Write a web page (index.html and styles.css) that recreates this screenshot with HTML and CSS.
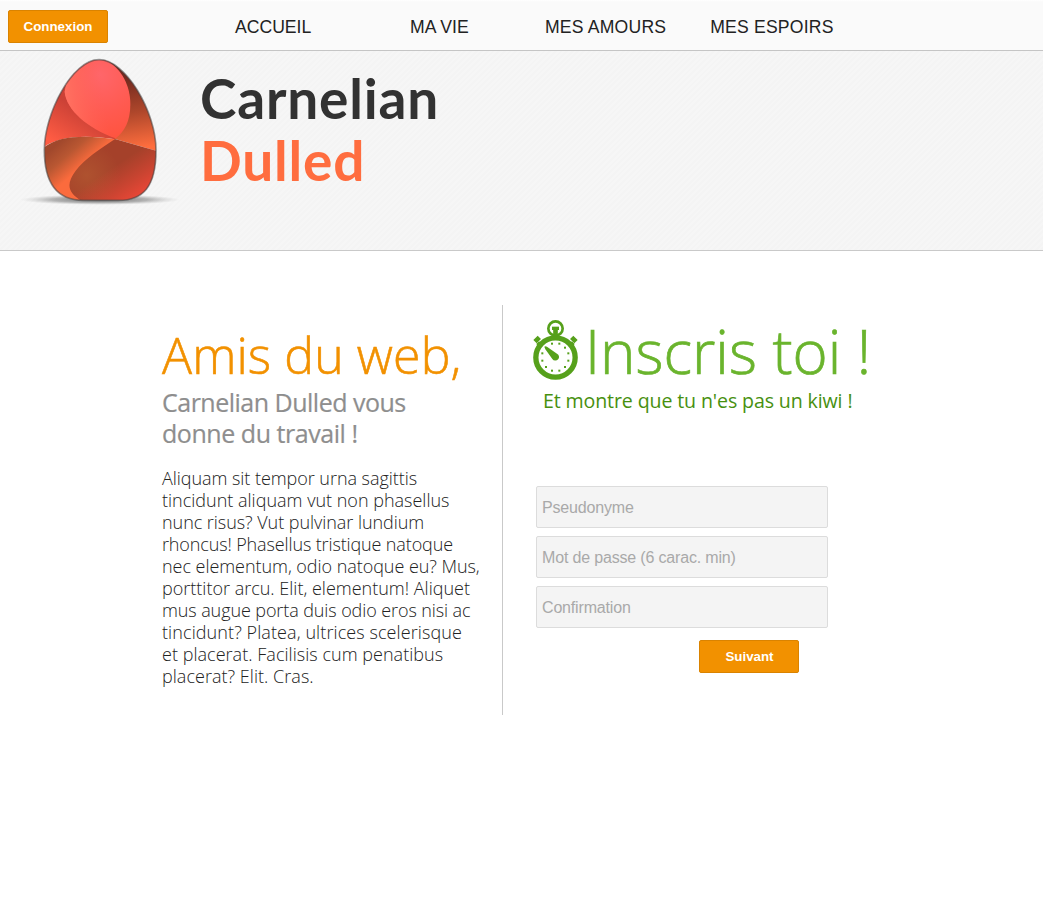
FILE: index.html
```
<!DOCTYPE html>
<html lang="fr">
<head>
<meta charset="utf-8">
<title>Carnelian Dulled</title>
<link rel="stylesheet" href="styles.css">
</head>
<body>
<nav class="topbar">
  <button class="btn" type="button">Connexion</button>
  <ul class="menu">
    <li>ACCUEIL</li>
    <li>MA VIE</li>
    <li class="wide">MES AMOURS</li>
    <li class="wide">MES ESPOIRS</li>
  </ul>
</nav>
<header class="banner">
  <svg class="egg" viewBox="0 0 510 495" aria-hidden="true">
    <defs>
      <radialGradient id="shadow"><stop offset="0" stop-color="#555" stop-opacity=".9"/><stop offset=".6" stop-color="#888" stop-opacity=".6"/><stop offset="1" stop-color="#bbb" stop-opacity="0"/></radialGradient>
      <radialGradient id="top" gradientUnits="userSpaceOnUse" cx="255" cy="75" r="190"><stop offset="0" stop-color="#ff666a"/><stop offset=".6" stop-color="#ff5a50"/><stop offset="1" stop-color="#ff5440"/></radialGradient>
      <linearGradient id="shine" x1="0" x2="1" y1=".6" y2=".4"><stop offset="0" stop-color="#ff7766" stop-opacity=".9"/><stop offset=".6" stop-color="#ff6055" stop-opacity="0"/></linearGradient>
      <linearGradient id="left" gradientUnits="userSpaceOnUse" x1="195" y1="180" x2="130" y2="285"><stop offset="0" stop-color="#cb4136"/><stop offset="1" stop-color="#ff5c43"/></linearGradient>
      <linearGradient id="right" gradientUnits="userSpaceOnUse" x1="340" y1="80" x2="375" y2="295"><stop offset="0" stop-color="#71291f"/><stop offset=".5" stop-color="#af472b"/><stop offset="1" stop-color="#ff6e3e"/></linearGradient>
      <linearGradient id="lower" gradientUnits="userSpaceOnUse" x1="135" y1="275" x2="200" y2="350"><stop offset="0" stop-color="#a1482c"/><stop offset=".45" stop-color="#b95732"/><stop offset="1" stop-color="#fb6b3d"/></linearGradient>
      <radialGradient id="base" gradientUnits="userSpaceOnUse" cx="215" cy="375" r="220"><stop offset="0" stop-color="#af522f"/><stop offset=".45" stop-color="#a5412a"/><stop offset="1" stop-color="#a5412a"/></radialGradient>
      <linearGradient id="glow" gradientUnits="userSpaceOnUse" x1="310" y1="340" x2="380" y2="445"><stop offset="0" stop-color="#e64536" stop-opacity="0"/><stop offset="1" stop-color="#f04838"/></linearGradient>
      <clipPath id="shell"><path d="M252 29C332 29 423 185 423 300C423 410 385 451 310 451H205C125 451 88 400 88 300C88 190 172 29 252 29Z"/></clipPath>
    </defs>
    <ellipse cx="255" cy="449" rx="240" ry="16" fill="url(#shadow)"/>
    <g clip-path="url(#shell)">
      <path fill="url(#left)" d="M80 20H300V268C220 255 130 255 80 296Z"/>
      <path fill="url(#right)" d="M250 20H430V304L300 267Z"/>
      <path fill="url(#lower)" d="M80 298C125 253 220 255 300 268L250 460H80Z"/>
      <path fill="url(#base)" d="M300 267L430 304V460H215C158 434 150 405 182 362C210 325 255 298 300 267Z"/>
      <path fill="url(#glow)" d="M300 267L430 304V460H215C158 434 150 405 182 362C210 325 255 298 300 267Z"/>
      <path fill="url(#top)" d="M149 125L170 20H252C320 45 347 110 346 165C345 215 330 242 302 265C218 235 154 180 149 125Z"/>
      <path fill="url(#shine)" d="M149 125L170 20H252C320 45 347 110 346 165C345 215 330 242 302 265C218 235 154 180 149 125Z"/>
    </g>
    <path d="M252 29C332 29 423 185 423 300C423 410 385 451 310 451H205C125 451 88 400 88 300C88 190 172 29 252 29Z" fill="none" stroke="#444" stroke-opacity=".55" stroke-width="5"/>
  </svg>
  <h1 class="brand"><span class="brand-first">Carnelian</span><span class="brand-second">Dulled</span></h1>
</header>
<main class="content">
  <section class="intro">
    <h2 class="intro-title">Amis du web,</h2>
    <p class="intro-sub"><span class="s1">Carnelian Dulled vous</span><span class="s2">donne du travail !</span></p>
    <p class="intro-text">
      <span class="t1">Aliquam sit tempor urna sagittis</span>
      <span>tincidunt aliquam vut non phasellus</span>
      <span class="t1">nunc risus? Vut pulvinar lundium</span>
      <span class="t4">rhoncus! Phasellus tristique natoque</span>
      <span class="t1">nec elementum, odio natoque eu? Mus,</span>
      <span>porttitor arcu. Elit, elementum! Aliquet</span>
      <span class="t7">mus augue porta duis odio eros nisi ac</span>
      <span class="t8">tincidunt? Platea, ultrices scelerisque</span>
      <span class="t9">et placerat. Facilisis cum penatibus</span>
      <span class="t9">placerat? Elit. Cras.</span>
    </p>
  </section>
  <section class="signup">
    <div class="signup-head">
      <svg class="watch" viewBox="0 0 135 180" aria-hidden="true">
        <g fill="none" stroke="#56a01b">
          <circle cx="67.500" cy="25.500" r="21.500" stroke-width="8"/>
          <circle cx="67.500" cy="112.500" r="59" stroke-width="16"/>
          <path d="M67.500 24V50" stroke-width="14"/>
          <path d="M57 25H78" stroke-width="10"/>
          <path d="M14 68L26 80M121 68L109 80" stroke-width="12"/>
          <path d="M6 65L19 52M129 65L116 52" stroke-width="14"/>
        </g>
        <path fill="#56a01b" d="M34 80Q38 77 43 81L72 101A11 11 0 1 1 58 117L37 88Z"/>
        <g fill="#56a01b">
          <rect x="54" y="68" width="6" height="6"/><rect x="76" y="68" width="6" height="6"/>
          <rect x="93" y="80" width="6" height="6"/><rect x="103" y="97" width="6" height="6"/>
          <rect x="103" y="119" width="6" height="6"/><rect x="93" y="138" width="6" height="6"/>
          <rect x="76" y="149" width="6" height="6"/><rect x="54" y="149" width="6" height="6"/>
          <rect x="36" y="138" width="6" height="6"/><rect x="25" y="119" width="6" height="6"/>
          <rect x="25" y="97" width="6" height="6"/>
        </g>
      </svg>
      <h2 class="signup-title">Inscris toi !</h2>
    </div>
    <p class="signup-sub">Et montre que tu n'es pas un kiwi !</p>
    <form class="form">
      <input class="field" type="text" placeholder="Pseudonyme">
      <input class="field" type="password" placeholder="Mot de passe (6 carac. min)">
      <input class="field" type="password" placeholder="Confirmation">
      <button class="btn btn-next" type="button">Suivant</button>
    </form>
  </section>
</main>
</body>
</html>
```
FILE: styles.css
```
* { box-sizing: border-box; margin: 0; padding: 0; }
body { background: #fff; color: #222; font-family: "Open Sans", sans-serif; }

.topbar {
  display: flex;
  align-items: flex-start;
  height: 51px;
  padding: 10px 8px 0;
  background: linear-gradient(#fff, #fafafa 2px);
  border-bottom: 1px solid #c5c5c5;
}
.btn {
  width: 100px;
  height: 33px;
  background: #f29100;
  border: 1px solid #da8300;
  border-radius: 2px;
  color: #fff;
  font: bold 13.33px "Liberation Sans", Arial, sans-serif;
}
.menu {
  display: flex;
  width: 665px;
  margin-left: 82px;
  list-style: none;
  font: 17.6px/35px "Liberation Sans", Arial, sans-serif;
  text-align: center;
}
.menu li { flex: 1; }
.menu .wide { letter-spacing: 0.2px; }

.banner {
  display: flex;
  height: 200px;
  padding-left: 15px;
  background: repeating-linear-gradient(135deg, #f4f4f4 0 2px, #f6f6f6 2px 4px);
  border-bottom: 1px solid #c9c9c9;
}
.egg { width: 170px; height: 165px; margin-top: -1px; }
.brand {
  display: flex;
  flex-direction: column;
  padding: 16px 0 0 15px;
  font: 700 55px/62px Lato, sans-serif;
  letter-spacing: 0.8px;
}
.brand-first { color: #323232; }
.brand-second { color: #ff6d3f; }

.content { display: flex; padding: 54px 0 0 162px; }
.intro {
  width: 341px;
  height: 410px;
  padding-top: 20px;
  border-right: 1px solid #c9c9c9;
}
.intro-title {
  color: #f29100;
  font-size: 50px;
  font-weight: 300;
  line-height: 60px;
  letter-spacing: 0.1px;
  -webkit-text-stroke: 0.6px #f29100;
}
.intro-sub {
  padding-top: 2px;
  color: #8e8e8e;
  font-size: 25px;
  line-height: 31px;
  -webkit-text-stroke: 0.2px #8e8e8e;
}
.intro-sub span, .intro-text span { display: block; white-space: nowrap; }
.s1 { letter-spacing: -0.5px; }
.s2 { letter-spacing: -0.45px; }
.intro-text {
  padding-top: 18px;
  font-size: 18px;
  font-weight: 300;
  line-height: 22px;
}
.t1 { letter-spacing: -0.05px; }
.t4 { letter-spacing: -0.13px; }
.t7 { letter-spacing: -0.1px; }
.t8 { letter-spacing: 0.09px; }
.t9 { letter-spacing: 0.03px; }

.signup { padding: 9px 0 0 30px; }
.signup-head { display: flex; }
.watch { width: 45px; height: 60px; margin-top: 6px; }
.signup-title {
  padding: 2px 0 0 7px;
  color: #6ab42d;
  font-size: 60px;
  font-weight: 300;
  line-height: 70px;
  -webkit-text-stroke: 0.7px #6ab42d;
}
.signup-sub {
  padding: 2px 0 0 10px;
  color: #47900f;
  font-size: 19.6px;
  line-height: 26px;
  letter-spacing: -0.13px;
}
.form {
  display: flex;
  flex-direction: column;
  gap: 8px;
  width: 292px;
  margin: 72px 0 0 3px;
}
.field {
  height: 42px;
  padding: 2px 5px 0;
  background: #f4f4f4;
  border: 1px solid #dcdcdc;
  border-radius: 2px;
  font: 16px "Liberation Sans", Arial, sans-serif;
  letter-spacing: -0.17px;
}
.field::placeholder { color: #a9a9a9; }
.btn-next { margin: 4px 0 0 163px; padding-left: 1px; }
```
